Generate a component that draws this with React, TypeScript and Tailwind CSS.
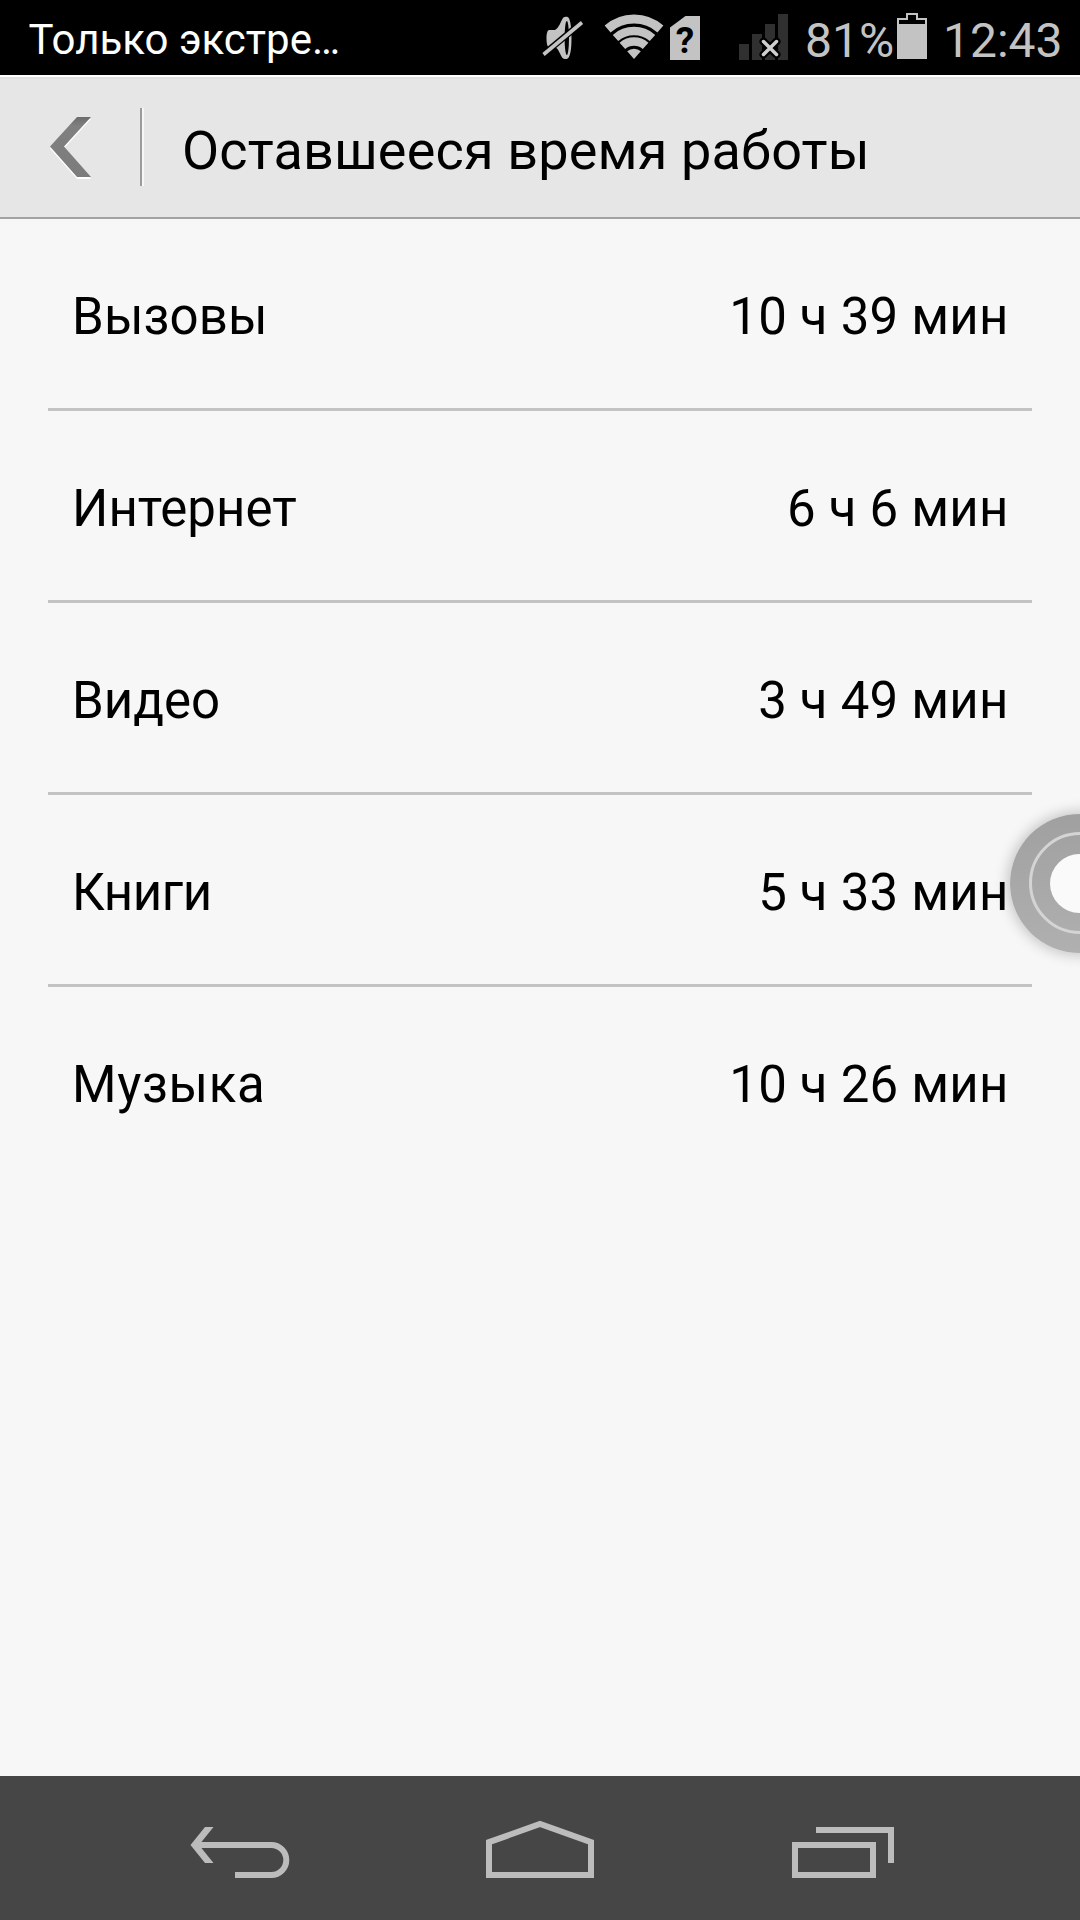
const items = [
  { label: 'Вызовы', time: '10 ч 39 мин', tracking: 'tracking-[0.100px]' },
  { label: 'Интернет', time: '6 ч 6 мин', tracking: 'tracking-normal' },
  { label: 'Видео', time: '3 ч 49 мин', tracking: 'tracking-normal' },
  { label: 'Книги', time: '5 ч 33 мин', tracking: 'tracking-[-0.400px]' },
  { label: 'Музыка', time: '10 ч 26 мин', tracking: 'tracking-[0.650px]' },
];

function MuteIcon() {
  return (
    <svg className="ml-auto h-[75px] w-12 shrink-0" viewBox="0 0 48 75" fill="#c3c3c3">
      <path d="M9 30h6c4-2 6-9 8-12 1-1.300 2-1.300 4-1.300 3 0 4.500 9 4.500 21.300S30 59 26.500 59c-3 0-4-.5-5-2.500-2-4-3.500-8-6.500-9.500H9c-1.500 0-2.500-3.500-2.500-8.500S7.500 30 9 30z" />
      <ellipse cx="26.800" cy="38" rx="2.200" ry="17" fill="#000" />
      <path d="M2 55.500 43 21.500" stroke="#000" strokeWidth="6.500" />
      <path d="M3.500 54.500 42 22.500" stroke="#c3c3c3" strokeWidth="3.600" />
    </svg>
  );
}

function WifiIcon() {
  return (
    <svg className="ml-3 h-[75px] w-[68px] shrink-0" viewBox="0 0 68 75" fill="none" stroke="#c3c3c3">
      <path d="M7.600 29A40 40 0 0 1 60.400 29" strokeWidth="9" />
      <path d="M15.500 38A28 28 0 0 1 52.500 38" strokeWidth="8.300" />
      <path d="M22.400 45.900A17.500 17.500 0 0 1 45.600 45.900" strokeWidth="8.500" />
      <path d="M34 59 27.200 51.300A10.300 10.300 0 0 1 40.800 51.300z" fill="#c3c3c3" stroke="none" />
    </svg>
  );
}

function SimIcon() {
  return (
    <svg className="ml-0.5 h-[75px] w-[30px] shrink-0" viewBox="0 0 30 75">
      <path d="M15.500 16H30v44H0V27.500z" fill="#c3c3c3" />
      <text x="15" y="53" textAnchor="middle" className="font-['Roboto',sans-serif] text-[37px] font-bold" fill="#000">
        ?
      </text>
    </svg>
  );
}

function SignalIcon() {
  return (
    <svg className="ml-[39px] h-[75px] w-[49px] shrink-0" viewBox="0 0 49 75">
      <path d="M0 44h10v16H0zM13 34h10v26H13zM26 24h10v36H26zM39 14h10v46H39z" fill="#303030" />
      <g strokeLinecap="round">
        <path d="M24.500 41.500 37.500 54.500M37.500 41.500 24.500 54.500" stroke="#000" strokeWidth="8" />
        <path d="M24.500 41.500 37.500 54.500M37.500 41.500 24.500 54.500" stroke="#cfcfcf" strokeWidth="3.500" />
      </g>
    </svg>
  );
}

function BatteryIcon() {
  return (
    <svg className="ml-[3px] h-[75px] w-[30px] shrink-0" viewBox="0 0 30 75">
      <path d="M1 58V19h9v-5h10v5h9v39z" fill="none" stroke="#c3c3c3" strokeWidth="2" />
      <path d="M0 24h30v35H0z" fill="#c3c3c3" />
    </svg>
  );
}

function StatusBar() {
  return (
    <div className="flex h-[75px] shrink-0 items-center bg-black text-[#c3c3c3]">
      <span className="pt-1 pl-[28.500px] text-[42px] leading-none text-white">Только экстре…</span>
      <MuteIcon />
      <WifiIcon />
      <SimIcon />
      <SignalIcon />
      <span className="ml-[17px] w-[89px] shrink-0 pt-1.5 text-[48px] leading-none">81%</span>
      <BatteryIcon />
      <span className="mr-[17px] ml-4 w-[120px] shrink-0 pt-1.5 text-[48px] leading-none">12:43</span>
    </div>
  );
}

function Header() {
  return (
    <div className="flex h-36 shrink-0 items-center border-t-2 border-b-2 border-t-white border-b-[#a2a2a2] bg-[#e6e6e6] shadow-[inset_0_2px_0_#e0e0e0]">
      <button className="ml-12 h-[68px] w-12">
        <svg className="h-[68px] w-12" viewBox="0 0 48 68">
          <defs>
            <linearGradient id="chevron" x1="0" y1="0" x2="0" y2="1">
              <stop offset="0" stopColor="#6c6c6c" />
              <stop offset="0.150" stopColor="#808080" />
              <stop offset="1" stopColor="#7c7c7c" />
            </linearGradient>
          </defs>
          <path d="M2 35.500 29 6h14L16 35.500 43 66H29z" fill="#fff" />
          <path d="M2 33.500 29 4h14L16 33.500 43 64H29z" fill="url(#chevron)" />
        </svg>
      </button>
      <div className="ml-11 h-[78px] w-1 border-r-2 border-l-2 border-r-[#f6f6f6] border-l-[#9c9c9c]" />
      <h1 className="ml-[38px] pt-[7px] text-[54px] leading-none tracking-[0.160px]">Оставшееся время работы</h1>
    </div>
  );
}

function FloatingButton() {
  return (
    <div className="absolute top-[813.500px] left-[1010px] flex h-[139px] w-[139px] items-center justify-center rounded-full bg-linear-to-b from-[#a0a0a0] to-[#b0b0b0] shadow-[0_0_14px_2px_rgba(0,0,0,0.220)]">
      <div className="flex h-[102px] w-[102px] items-center justify-center rounded-full border-3 border-[#d4d4d4]">
        <div className="h-[59px] w-[59px] rounded-full bg-[#fafafa]" />
      </div>
    </div>
  );
}

function NavBar() {
  return (
    <div className="flex h-36 shrink-0 items-center gap-[184px] bg-[#464646] pl-[184px]">
      <svg className="h-16 w-28" viewBox="0 0 112 64" fill="none" stroke="#bcbcbc" strokeWidth="6">
        <path d="M6.500 29 21 11h8.500L15 29l14.500 18H21z" fill="#bcbcbc" stroke="none" />
        <path d="M12 29H87.300a15 15 0 0 1 0 30H51" />
      </svg>
      <svg className="h-16 w-[120px]" viewBox="0 0 120 64" fill="none" stroke="#bcbcbc" strokeWidth="6">
        <path d="M9 26.200 60 8l51 18.200V59H9z" />
      </svg>
      <svg className="h-16 w-[120px]" viewBox="0 0 120 64" fill="none" stroke="#bcbcbc" strokeWidth="6">
        <path d="M11 29h78v30H11zM32 14h75v33" />
      </svg>
    </div>
  );
}

export default function App() {
  return (
    <div className="relative flex h-[1920px] w-[1080px] flex-col overflow-hidden bg-[#f7f7f7] font-['Roboto',sans-serif] text-black">
      <StatusBar />
      <Header />
      <ul className="flex-1 px-12">
        {items.map((item) => (
          <li
            key={item.label}
            className="flex h-48 items-center justify-between border-b-3 border-[#c3c3c3] pt-1.5 pr-[23.500px] pl-6 text-[51px] leading-none last:border-transparent"
          >
            <span className={item.tracking}>{item.label}</span>
            <span className="tracking-[0.200px]">{item.time}</span>
          </li>
        ))}
      </ul>
      <NavBar />
      <FloatingButton />
    </div>
  );
}
